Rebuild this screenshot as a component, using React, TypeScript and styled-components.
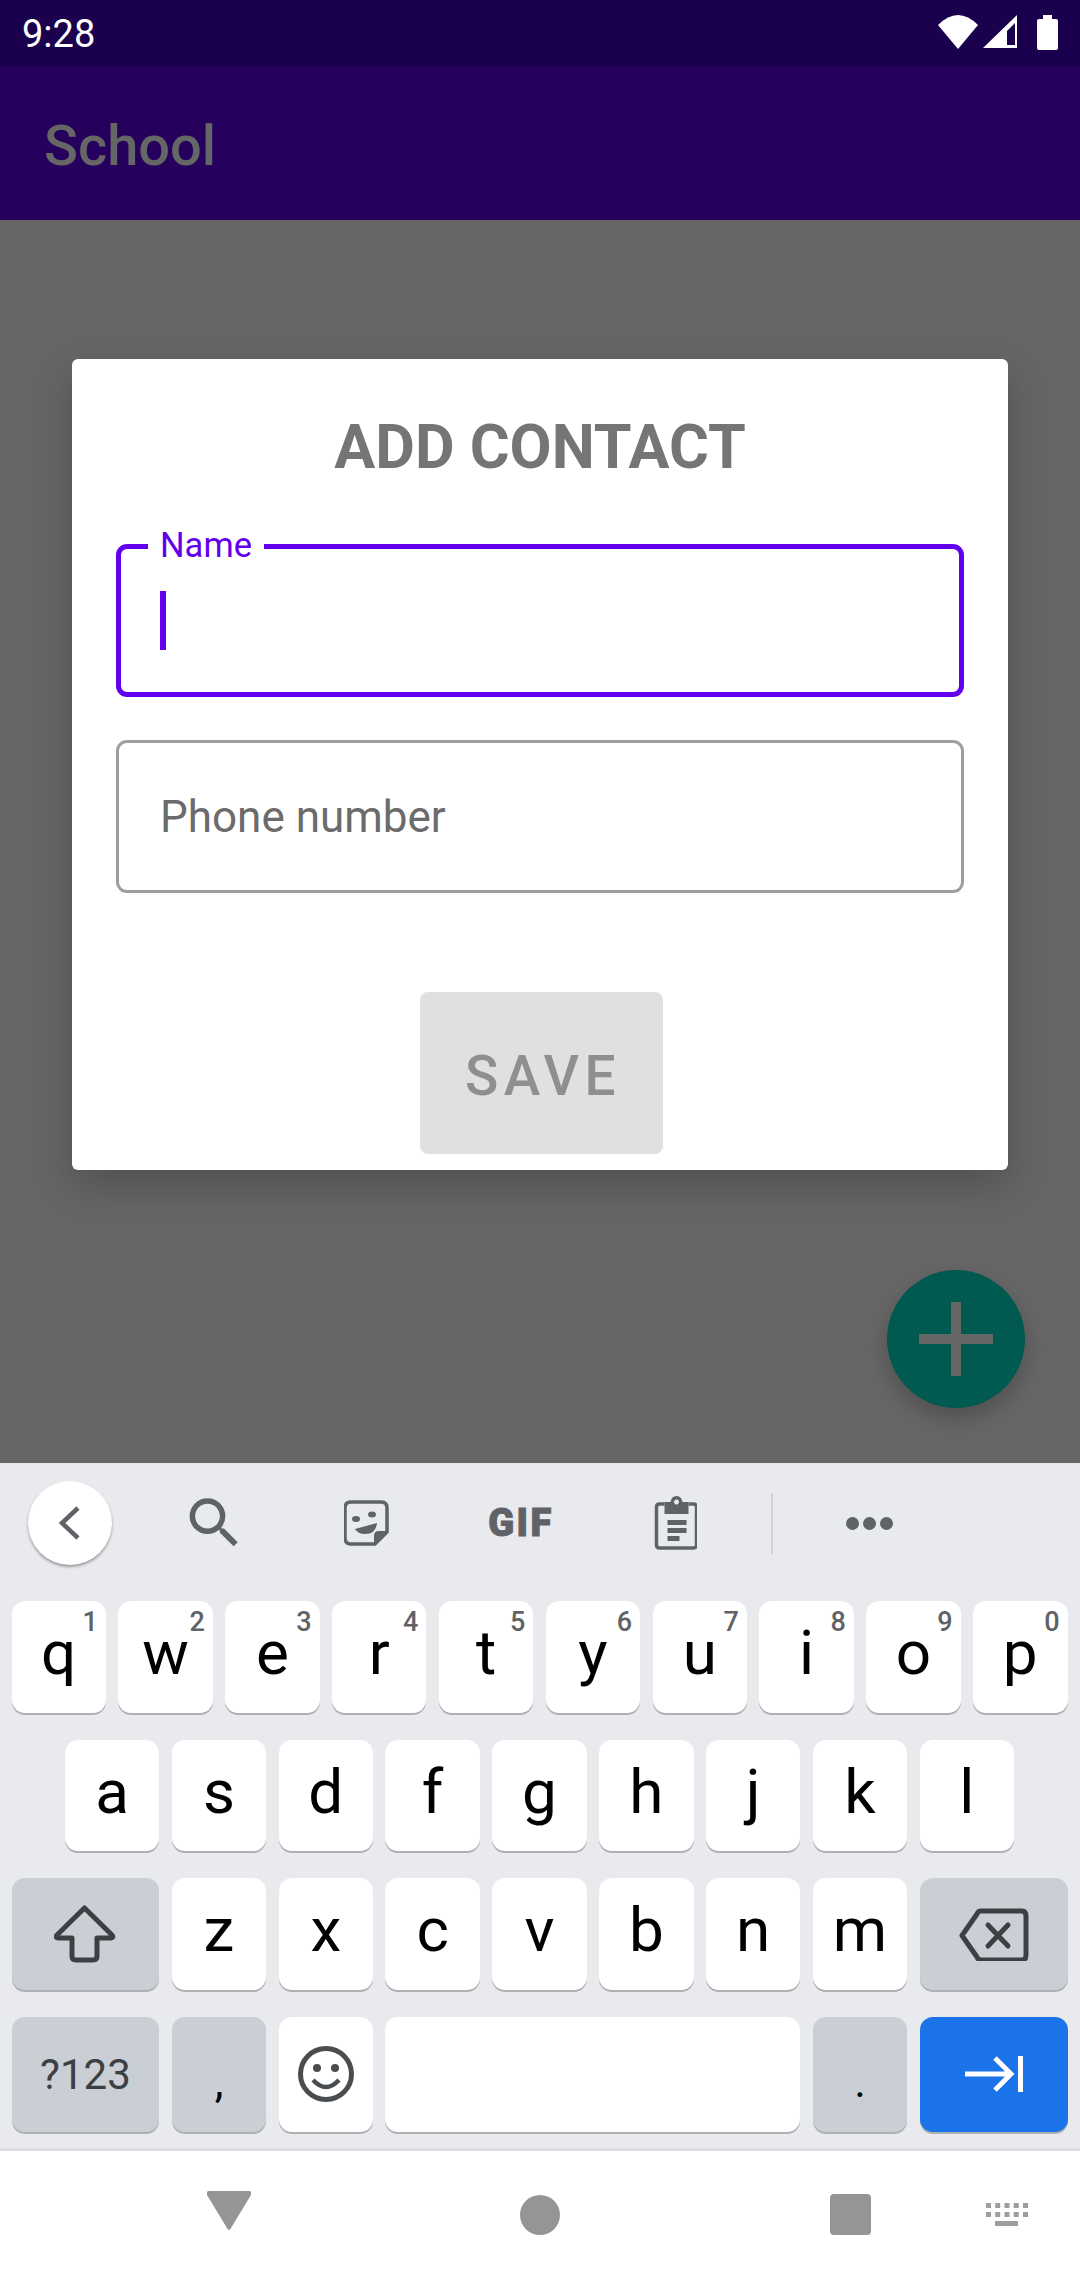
import styled, { createGlobalStyle } from "styled-components";

const GlobalStyle = createGlobalStyle`
  html, body {
    margin: 0;
    padding: 0;
    background: #666666;
  }
  * {
    box-sizing: border-box;
  }
`;

const ROW_ONE = [
  ["q", "1"],
  ["w", "2"],
  ["e", "3"],
  ["r", "4"],
  ["t", "5"],
  ["y", "6"],
  ["u", "7"],
  ["i", "8"],
  ["o", "9"],
  ["p", "0"],
];
const ROW_TWO = ["a", "s", "d", "f", "g", "h", "j", "k", "l"];
const ROW_THREE = ["z", "x", "c", "v", "b", "n", "m"];

function App() {
  return (
    <Screen>
      <GlobalStyle />
      <StatusBar>
        <Clock>9:28</Clock>
        <StatusIcons>
          <svg width="40" height="34" viewBox="0 0 40 34">
            <path d="M20 34 L0 10 Q20 -10 40 10 Z" fill="#fff" />
          </svg>
          <svg width="34" height="34" viewBox="0 0 34 34">
            <path d="M34 0 V33 H0 Z" fill="#fff" />
            <path d="M24 16 L32 8 V30 H24 Z" fill="#1a004d" />
          </svg>
          <Battery />
        </StatusIcons>
      </StatusBar>
      <AppBar>School</AppBar>

      <Content>
        <Dialog>
          <DialogTitle>ADD CONTACT</DialogTitle>
          <Field $focused>
            <FieldLabel>Name</FieldLabel>
            <Caret />
          </Field>
          <Field>
            <Placeholder>Phone number</Placeholder>
          </Field>
          <SaveButton disabled>SAVE</SaveButton>
        </Dialog>
        <Fab>
          <svg width="74" height="74" viewBox="0 0 74 74">
            <path d="M32 0h10v32h32v10H42v32H32V42H0V32h32z" fill="#666" />
          </svg>
        </Fab>
      </Content>

      <Keyboard>
        <Toolbar>
          <BackButton>
            <svg width="24" height="36" viewBox="0 0 24 36">
              <path d="M20 3 L4 18 L20 33" fill="none" stroke="#5f6368" strokeWidth="4.5" />
            </svg>
          </BackButton>
          <ToolSlot>
            <svg width="66" height="66" viewBox="-0.5 0 24 24">
              <path
                fill="#5f6368"
                d="M15.5 14h-.79l-.28-.27A6.47 6.47 0 0 0 16 9.5 6.5 6.5 0 1 0 9.5 16c1.61 0 3.09-.59 4.23-1.57l.27.28v.79l5 4.99L20.49 19l-4.99-5zm-6 0C7.01 14 5 11.99 5 9.5S7.01 5 9.5 5 14 7.01 14 9.5 11.99 14 9.5 14z"
              />
            </svg>
          </ToolSlot>
          <ToolSlot>
            <svg width="46" height="46" viewBox="1 0 46 46">
              <path
                d="M8 2 H38 Q44 2 44 8 V32 L32 44 H8 Q2 44 2 38 V8 Q2 2 8 2 Z"
                fill="none"
                stroke="#5f6368"
                strokeWidth="3.5"
              />
              <path d="M44 31 L31 44 V36 Q31 31 36 31 Z" fill="#5f6368" />
              <ellipse cx="13" cy="19" rx="4" ry="3" fill="#5f6368" />
              <ellipse cx="29" cy="14.5" rx="4" ry="3" fill="#5f6368" />
              <path d="M12 29 L34 23 Q33 34 22 34 Q15 34 12 29 Z" fill="#5f6368" />
            </svg>
          </ToolSlot>
          <ToolSlot>
            <GifLabel>GIF</GifLabel>
          </ToolSlot>
          <ToolSlot>
            <svg width="44" height="54" viewBox="-1.5 0 44 54">
              <path
                d="M10 8 H5 Q2 8 2 11 V49 Q2 52 5 52 H39 Q42 52 42 49 V11 Q42 8 39 8 H34"
                fill="none"
                stroke="#5f6368"
                strokeWidth="3.5"
              />
              <path
                fill="#5f6368"
                fillRule="evenodd"
                d="M10 6 H16 Q17 0 22 0 Q27 0 28 6 H34 V18 H10 Z M22 3.5 a2.5 2.5 0 1 0 0.01 0 Z"
              />
              <rect x="13" y="24" width="19" height="5" fill="#5f6368" />
              <rect x="13" y="32" width="19" height="5" fill="#5f6368" />
              <rect x="13" y="40" width="12" height="5" fill="#5f6368" />
            </svg>
          </ToolSlot>
          <ToolDivider />
          <ToolSlot>
            <MoreDots>
              <i />
              <i />
              <i />
            </MoreDots>
          </ToolSlot>
        </Toolbar>

        <KeyRows>
          <KeyRow>
            {ROW_ONE.map(([letter, digit]) => (
              <Key key={letter}>
                {letter}
                <KeyHint>{digit}</KeyHint>
              </Key>
            ))}
          </KeyRow>
          <KeyRow $indent>
            {ROW_TWO.map((letter) => (
              <Key key={letter}>{letter}</Key>
            ))}
          </KeyRow>
          <KeyRow>
            <Key $span={3} $tone="function" $icon>
              <svg width="62" height="60" viewBox="0 0 62 60">
                <path
                  d="M30.5 4 L58 31 Q60 34 57 34 H43 V52 Q43 56 39 56 H22 Q18 56 18 52 V34 H4 Q1 34 3 31 Z"
                  fill="none"
                  stroke="#3c4043"
                  strokeWidth="5"
                  strokeLinejoin="round"
                />
              </svg>
            </Key>
            {ROW_THREE.map((letter) => (
              <Key key={letter}>{letter}</Key>
            ))}
            <Key $span={3} $tone="function" $icon>
              <svg width="70" height="55" viewBox="0 -2 70 55">
                <path
                  d="M22 3 H63 Q67 3 67 8 V47 Q67 52 63 52 H22 Q19 52 18 49 L3 27.5 L18 6 Q19 3 22 3 Z"
                  fill="none"
                  stroke="#3c4043"
                  strokeWidth="5"
                  strokeLinejoin="round"
                />
                <path
                  d="M29 17 L49 38 M49 17 L29 38"
                  stroke="#3c4043"
                  strokeWidth="5"
                  strokeLinecap="round"
                />
              </svg>
            </Key>
          </KeyRow>
          <KeyRow $tall>
            <Key $span={3} $tone="function" $small>
              ?123
            </Key>
            <Key $tone="function" $punct>
              ,
            </Key>
            <Key $icon>
              <svg width="56" height="56" viewBox="0 0 56 56">
                <circle cx="28" cy="28" r="25.5" fill="none" stroke="#4a4d50" strokeWidth="5" />
                <circle cx="19" cy="22" r="4" fill="#4a4d50" />
                <circle cx="37" cy="22" r="4" fill="#4a4d50" />
                <path d="M15 34 Q28 48 41 34" fill="none" stroke="#4a4d50" strokeWidth="4.5" />
              </svg>
            </Key>
            <Key $span={8} />
            <Key $tone="function" $punct>
              .
            </Key>
            <Key $span={3} $tone="action" $icon>
              <svg width="58" height="36" viewBox="0 0 58 36">
                <path d="M0 18 H44 M30 2 L46 18 L30 34" fill="none" stroke="#fff" strokeWidth="5" />
                <rect x="53" y="0" width="5" height="36" fill="#fff" />
              </svg>
            </Key>
          </KeyRow>
        </KeyRows>
      </Keyboard>

      <NavBar>
        <NavSlot>
          <svg width="44" height="48" viewBox="0 0 44 48">
            <path d="M2 0 H42 Q45 0 44 4 L24 37 Q22 41 20 37 L0 4 Q-1 0 2 0 Z" fill="#959595" />
          </svg>
        </NavSlot>
        <NavSlot $gap={269}>
          <svg width="40" height="48" viewBox="0 0 40 48">
            <circle cx="20" cy="24" r="20" fill="#959595" />
          </svg>
        </NavSlot>
        <NavSlot $gap={270}>
          <svg width="41" height="48" viewBox="0 0 41 48">
            <rect x="0" y="3" width="41" height="41" rx="4" fill="#959595" />
          </svg>
        </NavSlot>
        <NavSlot $gap={115}>
          <svg width="42" height="48" viewBox="0 0 42 48">
            <g fill="#9e9e9e">
              <rect x="0" y="12" width="5" height="5" />
              <rect x="9.2" y="12" width="5" height="5" />
              <rect x="18.5" y="12" width="5" height="5" />
              <rect x="27.7" y="12" width="5" height="5" />
              <rect x="37" y="12" width="5" height="5" />
              <rect x="0" y="21" width="5" height="5" />
              <rect x="9.2" y="21" width="5" height="5" />
              <rect x="18.5" y="21" width="5" height="5" />
              <rect x="27.7" y="21" width="5" height="5" />
              <rect x="37" y="21" width="5" height="5" />
              <rect x="9" y="30" width="23" height="5" />
            </g>
          </svg>
        </NavSlot>
      </NavBar>
    </Screen>
  );
}
export default App;

const Screen = styled.div`
  width: 1080px;
  height: 2280px;
  display: flex;
  flex-direction: column;
  overflow: hidden;
  font-family: Roboto, "Liberation Sans", sans-serif;
`;

const StatusBar = styled.div`
  height: 66px;
  flex: none;
  display: flex;
  justify-content: space-between;
  align-items: center;
  padding: 2px 22px 0;
  background: #1a004d;
`;

const Clock = styled.span`
  color: #fff;
  font-size: 38px;
`;

const StatusIcons = styled.div`
  display: flex;
  align-items: center;
  gap: 5px;
  margin-bottom: 4px;
`;

const Battery = styled.div`
  position: relative;
  width: 21px;
  height: 31px;
  margin: 4px 0 0 15px;
  border-radius: 2px;
  background: #fff;

  &::before {
    content: "";
    position: absolute;
    top: -4px;
    left: 6px;
    width: 9px;
    height: 4px;
    background: #fff;
  }
`;

const AppBar = styled.div`
  height: 154px;
  flex: none;
  display: flex;
  align-items: center;
  padding: 5px 44px 0;
  background: #26005d;
  color: #666666;
  font-size: 56px;
  font-weight: 500;
`;

const Content = styled.main`
  position: relative;
  flex: 1;
  padding: 139px 72px 0;
  background: #666666;
`;

const Dialog = styled.section`
  height: 811px;
  display: flex;
  flex-direction: column;
  align-items: center;
  padding: 0 44px;
  border-radius: 6px;
  background: #fff;
  box-shadow: 0 16px 44px rgba(0, 0, 0, 0.22);
`;

const DialogTitle = styled.h2`
  height: 185px;
  margin: 0;
  padding-top: 51px;
  color: #757575;
  font-size: 61px;
  line-height: 74px;
  font-weight: 700;
`;

const Field = styled.div<{ $focused?: boolean }>`
  position: relative;
  width: 100%;
  height: 153px;
  margin-bottom: 43px;
  display: flex;
  align-items: center;
  padding-left: ${(p) => (p.$focused ? "39px" : "41px")};
  border-radius: 11px;
  border: ${(p) => (p.$focused ? "5.5px solid #6200ee" : "3px solid #9e9e9e")};
`;

const FieldLabel = styled.label`
  position: absolute;
  top: -21px;
  left: 27px;
  padding: 0 12px;
  background: #fff;
  color: #6200ee;
  font-size: 34.5px;
  line-height: 34px;
`;

const Caret = styled.span`
  width: 6px;
  height: 59px;
  background: #6200ee;
`;

const Placeholder = styled.span`
  color: #6b6b6b;
  font-size: 44px;
`;

const SaveButton = styled.button`
  width: 243px;
  height: 162px;
  margin: 56px 0 0 3px;
  padding: 6px 0 0 3px;
  border: none;
  border-radius: 8px;
  background: #e0e0e0;
  color: #8f8f8f;
  font-family: inherit;
  font-size: 55px;
  font-weight: 500;
  letter-spacing: 5.5px;
`;

const Fab = styled.button`
  position: absolute;
  top: 1050px;
  left: 887px;
  width: 138px;
  height: 138px;
  display: flex;
  align-items: center;
  justify-content: center;
  border: none;
  border-radius: 50%;
  background: #005a50;
  box-shadow: 0 10px 22px rgba(0, 0, 0, 0.22);
`;

const Keyboard = styled.div`
  flex: none;
  height: 688px;
  background: #e8eaed;
  border-bottom: 3px solid #dedfe1;
`;

const Toolbar = styled.div`
  height: 120px;
  display: flex;
  align-items: center;
  padding-left: 28px;
`;

const BackButton = styled.div`
  width: 84px;
  height: 84px;
  margin-right: 24px;
  display: flex;
  align-items: center;
  justify-content: center;
  border-radius: 50%;
  background: #fff;
  box-shadow: 0 2px 3px rgba(0, 0, 0, 0.35);
`;

const ToolSlot = styled.div`
  width: 154px;
  display: flex;
  justify-content: center;
`;

const GifLabel = styled.span`
  color: #5f6368;
  font-size: 38px;
  line-height: 40px;
  font-weight: 900;
  letter-spacing: 2.5px;
  -webkit-text-stroke: 1px #5f6368;
`;

const ToolDivider = styled.div`
  width: 2px;
  height: 61px;
  margin: 0 19px;
  background: #d0d2d6;
`;

const MoreDots = styled.div`
  display: flex;
  gap: 4px;

  i {
    width: 13px;
    height: 13px;
    border-radius: 50%;
    background: #5f6368;
  }
`;

const KeyRows = styled.div`
  display: flex;
  flex-direction: column;
  gap: 27px;
  padding: 18px 12.5px 0 11.5px;
`;

const KeyRow = styled.div<{ $indent?: boolean; $tall?: boolean }>`
  height: ${(p) => (p.$tall ? "115px" : "111.5px")};
  display: grid;
  grid-template-columns: repeat(20, 1fr);
  column-gap: 12.4px;

  ${(p) => p.$indent && "> :first-child { grid-column-start: 2; }"}
`;

const TONES = {
  letter: { bg: "#fff", fg: "#000" },
  function: { bg: "#caced5", fg: "#3c4043" },
  action: { bg: "#1a73e8", fg: "#fff" },
};

const Key = styled.div<{
  $span?: number;
  $tone?: keyof typeof TONES;
  $small?: boolean;
  $punct?: boolean;
  $icon?: boolean;
}>`
  position: relative;
  grid-column-end: span ${(p) => p.$span ?? 2};
  display: flex;
  align-items: center;
  justify-content: center;
  padding-bottom: ${(p) => (p.$small || p.$punct || p.$icon ? "0" : "8px")};
  padding-top: ${(p) => (p.$punct ? "16px" : "0")};
  border-radius: 13px;
  background: ${(p) => TONES[p.$tone ?? "letter"].bg};
  color: ${(p) => (p.$punct ? "#000" : TONES[p.$tone ?? "letter"].fg)};
  font-size: ${(p) => (p.$small ? "42px" : p.$punct ? "44px" : "62px")};
  box-shadow: 0 2px 0 #aeb0b4;
`;

const KeyHint = styled.span`
  position: absolute;
  top: 5px;
  right: 8px;
  color: #5f6368;
  font-size: 27px;
  font-weight: 500;
  line-height: 32px;
`;

const NavBar = styled.nav`
  height: 129px;
  flex: none;
  display: flex;
  align-items: flex-start;
  padding: 40px 0 0 207px;
  background: #fff;
`;

const NavSlot = styled.div<{ $gap?: number }>`
  margin-left: ${(p) => p.$gap ?? 0}px;
  line-height: 0;
`;
